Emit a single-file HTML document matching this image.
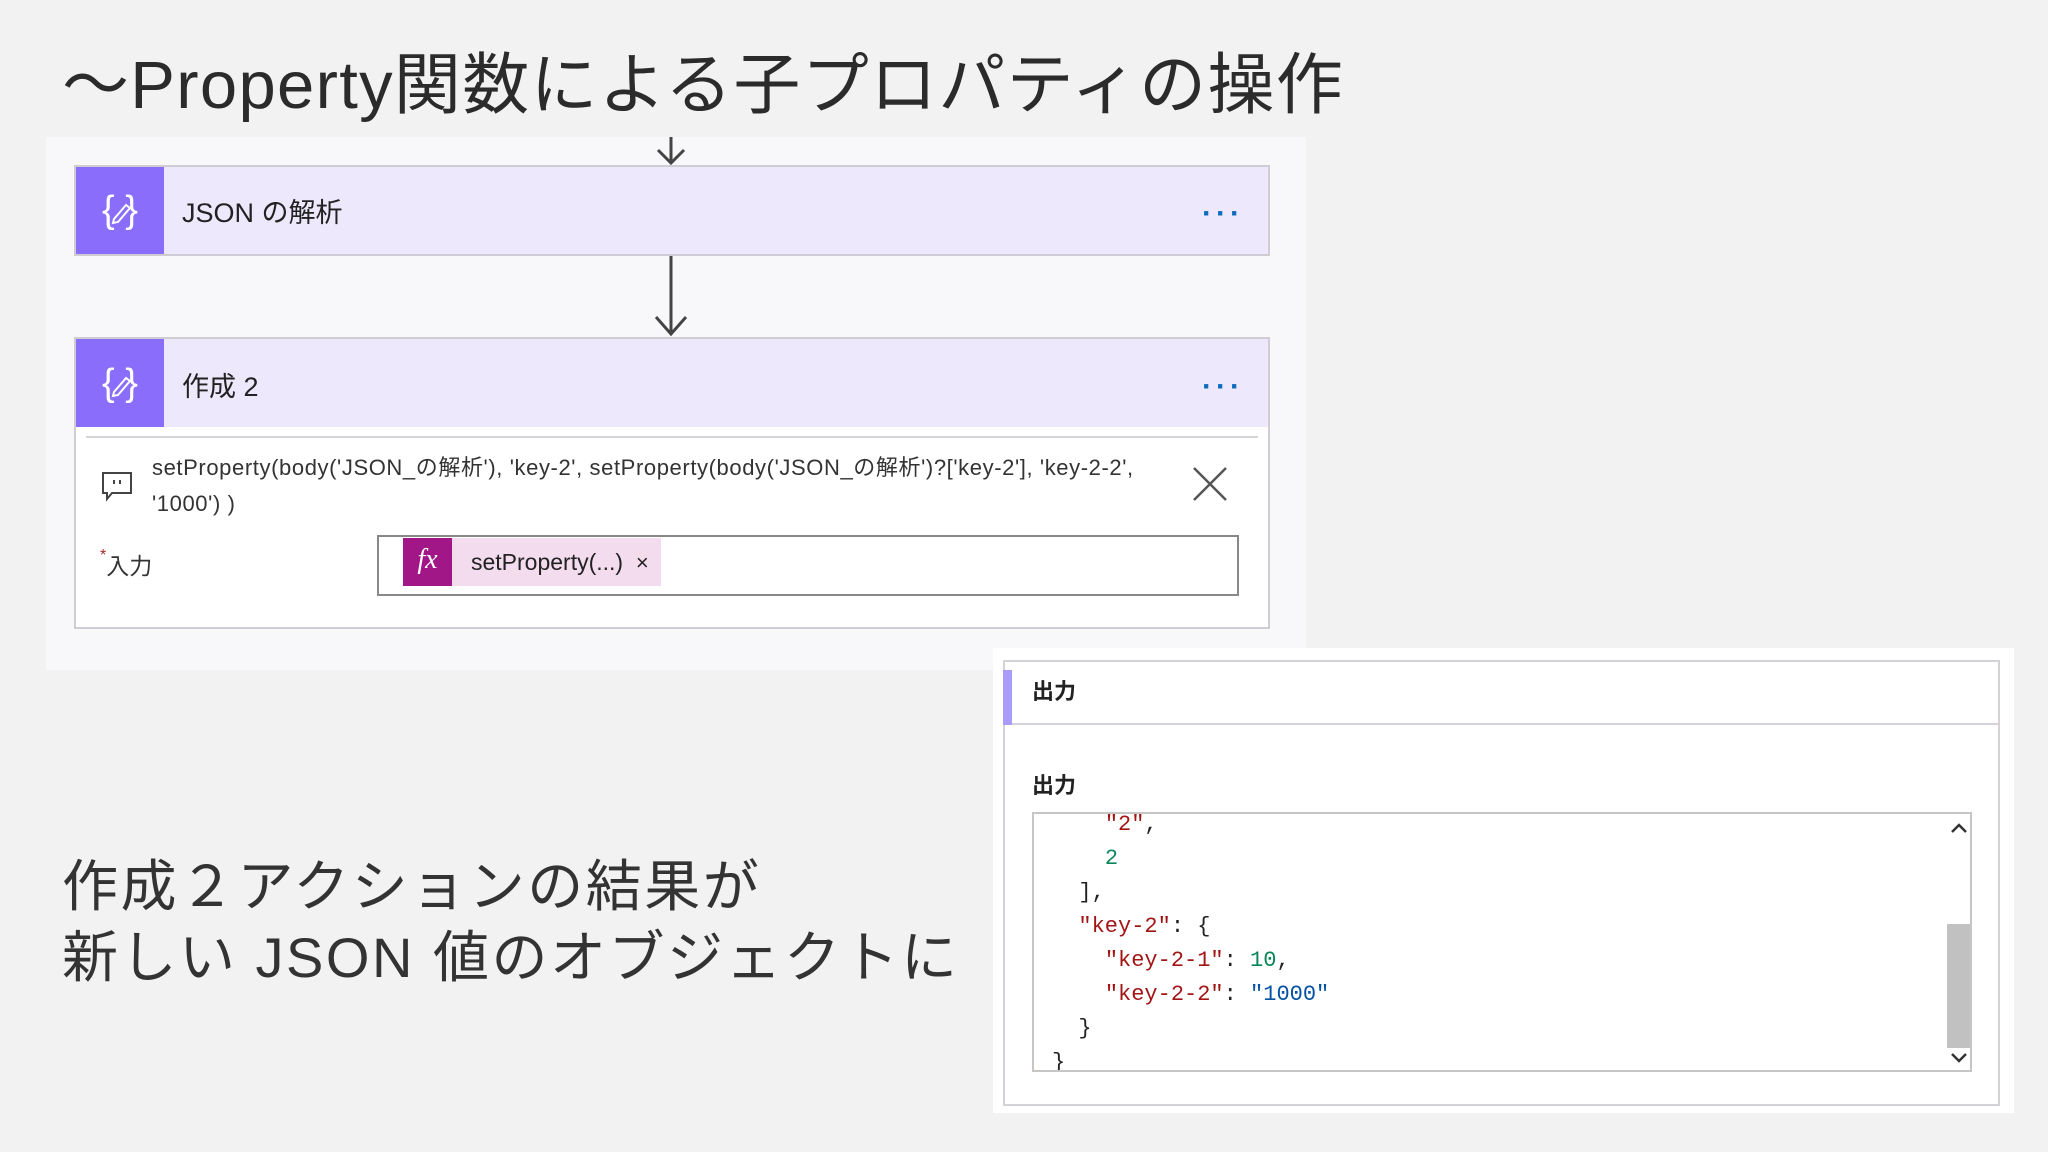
<!DOCTYPE html>
<html><head><meta charset="utf-8"><style>
*{margin:0;padding:0;box-sizing:border-box}
body{width:2048px;height:1152px;background:#f2f2f2;font-family:"Liberation Sans","Noto Sans CJK JP",sans-serif;color:#333;position:relative;overflow:hidden}
.abs{position:absolute}
.title{left:62px;top:44px;font-size:67px;line-height:84px;color:#2b2b2b;white-space:nowrap;letter-spacing:1.3px}
.panel{left:46px;top:137px;width:1260px;height:533px;background:#f8f7f9}
.card{left:74px;width:1196px;border:2px solid #cfcdd3;background:#ede8fc}
.icon{left:0;top:0;width:88px;height:86px;background:#8a6dfb}
.ctext{left:106px;font-size:27px;color:#222}
.dots{right:24px;font-size:30px;color:#0f6cbd;letter-spacing:4px;font-weight:bold}
.mono{font-family:"Liberation Mono","DejaVu Sans Mono",monospace;font-size:22px;white-space:pre;line-height:34px}
.bl{left:62px;font-size:56px;color:#333;white-space:nowrap;letter-spacing:2.5px}
</style></head><body>
<div class="abs title">～Property関数による子プロパティの操作</div>
<div class="abs panel"></div>
<svg class="abs" style="left:650px;top:137px" width="42" height="30"><path d="M21 0V26M8 13L21 26L34 13" stroke="#444" stroke-width="3" fill="none"/></svg>
<div class="abs card" style="top:165px;height:91px">
 <div class="abs icon" style="height:87px"><svg width="88" height="87"><text x="44" y="55" text-anchor="middle" font-size="38" fill="#fff" font-family="Liberation Sans">{ }</text><path d="M38 52l12-14 4 3-12 14-5 1z" stroke="#fff" stroke-width="2" fill="none"/></svg></div>
 <div class="abs ctext" style="top:24px">JSON の解析</div>
 <div class="abs dots" style="top:30px">···</div>
</div>
<svg class="abs" style="left:650px;top:256px" width="42" height="82"><path d="M21 0V78M6 61L21 78L36 61" stroke="#444" stroke-width="3" fill="none"/></svg>
<div class="abs card" style="top:337px;height:292px;background:#fff">
 <div class="abs" style="left:0;top:0;width:1192px;height:88px;background:#ede8fc"></div>
 <div class="abs icon" style="height:88px"><svg width="88" height="88"><text x="44" y="56" text-anchor="middle" font-size="38" fill="#fff" font-family="Liberation Sans">{ }</text><path d="M38 53l12-14 4 3-12 14-5 1z" stroke="#fff" stroke-width="2" fill="none"/></svg></div>
 <div class="abs ctext" style="top:26px">作成 2</div>
 <div class="abs dots" style="top:31px">···</div>
 <div class="abs" style="left:10px;top:97px;width:1172px;height:2px;background:#d6d4d8"></div>
 <svg class="abs" style="left:24px;top:130px" width="36" height="36"><path d="M3 4H31V24H12L7 30V24H3Z" stroke="#444" stroke-width="2" fill="none"/><path d="M14 11v4M20 11v4" stroke="#444" stroke-width="2"/></svg>
 <div class="abs" style="left:76px;top:111px;font-size:22px;line-height:36px;color:#333;width:1060px;letter-spacing:0.6px">setProperty(body('JSON_の解析'), 'key-2', setProperty(body('JSON_の解析')?['key-2'], 'key-2-2',<br>'1000') )</div>
 <svg class="abs" style="left:1116px;top:127px" width="36" height="36"><path d="M2 2L34 34M34 2L2 34" stroke="#555" stroke-width="2.5"/></svg>
 <div class="abs" style="left:24px;top:208px;font-size:23px;color:#333"><span style="color:#a4262c;font-size:16px;vertical-align:top">*</span>入力</div>
 <div class="abs" style="left:301px;top:196px;width:862px;height:61px;border:2px solid #8a8886;background:#fff">
  <div class="abs" style="left:24px;top:1px;width:258px;height:48px;background:#f4dcef"></div>
  <div class="abs" style="left:24px;top:1px;width:49px;height:48px;background:#a11787;color:#fff;font-family:'Liberation Serif',serif;font-style:italic;font-size:28px;text-align:center;line-height:44px">fx</div>
  <div class="abs" style="left:92px;top:12px;font-size:23px;color:#222">setProperty(...)&nbsp; <span style="font-size:22px">×</span></div>
 </div>
</div>
<div class="abs" style="left:993px;top:648px;width:1021px;height:465px;background:#fff"></div>
<div class="abs" style="left:1003px;top:660px;width:997px;height:446px;border:2px solid #d4d2d6;background:#fff"></div>
<div class="abs" style="left:1003px;top:723px;width:997px;height:2px;background:#d4d2d6"></div>
<div class="abs" style="left:1003px;top:670px;width:9px;height:55px;background:#a99cf8"></div>
<div class="abs" style="left:1032px;top:674px;font-size:22px;font-weight:bold;color:#222">出力</div>
<div class="abs" style="left:1032px;top:768px;font-size:22px;font-weight:bold;color:#222">出力</div>
<div class="abs" style="left:1032px;top:812px;width:940px;height:260px;border:2px solid #c8c6c4;background:#fff;overflow:hidden">
 <div class="abs mono" style="left:18px;top:-6px;color:#222"><span>    <span style="color:#a31515">"2"</span>,
    <span style="color:#098658">2</span>
  ],
  <span style="color:#a31515">"key-2"</span>: {
    <span style="color:#a31515">"key-2-1"</span>: <span style="color:#098658">10</span>,
    <span style="color:#a31515">"key-2-2"</span>: <span style="color:#0451a5">"1000"</span>
  }
}</span></div>
 <div class="abs" style="left:913px;top:110px;width:25px;height:124px;background:#c1c1c1"></div>
 <svg class="abs" style="left:914px;top:6px" width="22" height="16"><path d="M4 12L11 5L18 12" stroke="#333" stroke-width="2.5" fill="none"/></svg>
 <svg class="abs" style="left:914px;top:236px" width="22" height="16"><path d="M4 4L11 11L18 4" stroke="#333" stroke-width="2.5" fill="none"/></svg>
</div>
<div class="abs bl" style="top:842px">作成２アクションの結果が</div>
<div class="abs bl" style="top:913px">新しい JSON 値のオブジェクトに</div>
</body></html>
